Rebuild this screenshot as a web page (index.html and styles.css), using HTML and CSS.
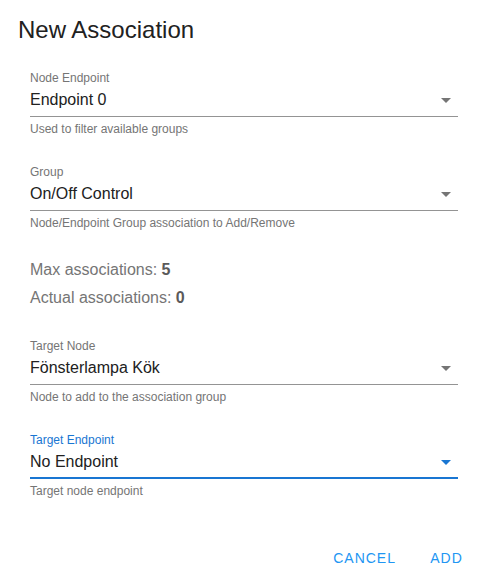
FILE: index.html
```html
<!DOCTYPE html>
<html lang="en">
<head>
<meta charset="utf-8">
<title>New Association</title>
<link rel="stylesheet" href="styles.css">
</head>
<body>
<div class="dialog">
  <h2 class="title">New Association</h2>
  <div class="content">
    <div class="field">
      <div class="label">Node Endpoint</div>
      <div class="select">
        <span class="value">Endpoint 0</span>
        <svg class="arrow" viewBox="0 0 24 24" width="24" height="24"><path d="M7 10l5 5 5-5z"/></svg>
      </div>
      <div class="helper">Used to filter available groups</div>
    </div>
    <div class="field">
      <div class="label">Group</div>
      <div class="select">
        <span class="value">On/Off Control</span>
        <svg class="arrow" viewBox="0 0 24 24" width="24" height="24"><path d="M7 10l5 5 5-5z"/></svg>
      </div>
      <div class="helper">Node/Endpoint Group association to Add/Remove</div>
    </div>
    <div class="stats">
      <p class="stat">Max associations: <b>5</b></p>
      <p class="stat">Actual associations: <b>0</b></p>
    </div>
    <div class="field">
      <div class="label">Target Node</div>
      <div class="select">
        <span class="value">Fönsterlampa Kök</span>
        <svg class="arrow" viewBox="0 0 24 24" width="24" height="24"><path d="M7 10l5 5 5-5z"/></svg>
      </div>
      <div class="helper">Node to add to the association group</div>
    </div>
    <div class="field focused">
      <div class="label">Target Endpoint</div>
      <div class="select">
        <span class="value">No Endpoint</span>
        <svg class="arrow" viewBox="0 0 24 24" width="24" height="24"><path d="M7 10l5 5 5-5z"/></svg>
      </div>
      <div class="helper">Target node endpoint</div>
    </div>
  </div>
  <div class="actions">
    <button class="btn">Cancel</button>
    <button class="btn">Add</button>
  </div>
</div>
</body>
</html>
```

FILE: styles.css
```css
* { box-sizing: border-box; }
html, body {
  margin: 0;
  padding: 0;
  background: #fff;
}
body {
  font-family: "Liberation Sans", Arial, sans-serif;
  color: #212121;
}
.dialog {
  width: 490px;
  height: 583px;
  display: flex;
  flex-direction: column;
}
.title {
  margin: 0;
  padding: 14px 0 0 18px;
  font-size: 24px;
  line-height: 32px;
  font-weight: 400;
  color: #212121;
}
.content {
  padding: 24px 32px 0 30px;
  display: flex;
  flex-direction: column;
}
.field {
  display: flex;
  flex-direction: column;
  margin-bottom: 27px;
}
.label {
  font-size: 12px;
  line-height: 16px;
  color: #757575;
}
.select {
  margin-top: 4px;
  display: flex;
  align-items: center;
  height: 27px;
  padding-bottom: 6px;
  border-bottom: 1px solid #949494;
}
.value {
  flex: 1;
  font-size: 16px;
  line-height: 20px;
  color: #212121;
}
.arrow {
  margin: -2px 0;
  fill: #757575;
  flex: none;
}
.helper {
  margin-top: 4px;
  font-size: 12px;
  line-height: 16px;
  color: #757575;
}
.stats {
  margin: -2px 0 26px;
}
.stats .stat {
  margin: 0;
  font-size: 16px;
  line-height: 28px;
  color: #757575;
}
.stats b {
  color: #5a5a5a;
}
.field.focused {
  margin-bottom: 0;
}
.field.focused .label {
  color: #1976d2;
}
.field.focused .select {
  border-bottom: 2px solid #1976d2;
  height: 27px;
  padding-bottom: 5px;
}
.field.focused .arrow {
  fill: #1976d2;
}
.actions {
  margin-top: auto;
  margin-bottom: 7px;
  display: flex;
  justify-content: flex-end;
  gap: 10px;
  padding-right: 12px;
}
.btn {
  font-family: "Liberation Sans", Arial, sans-serif;
  font-size: 14px;
  line-height: 36px;
  height: 36px;
  min-width: 64px;
  padding: 0 8px 0 9px;
  letter-spacing: 1px;
  text-transform: uppercase;
  color: #2196f3;
  background: none;
  border: none;
  cursor: pointer;
}
```
